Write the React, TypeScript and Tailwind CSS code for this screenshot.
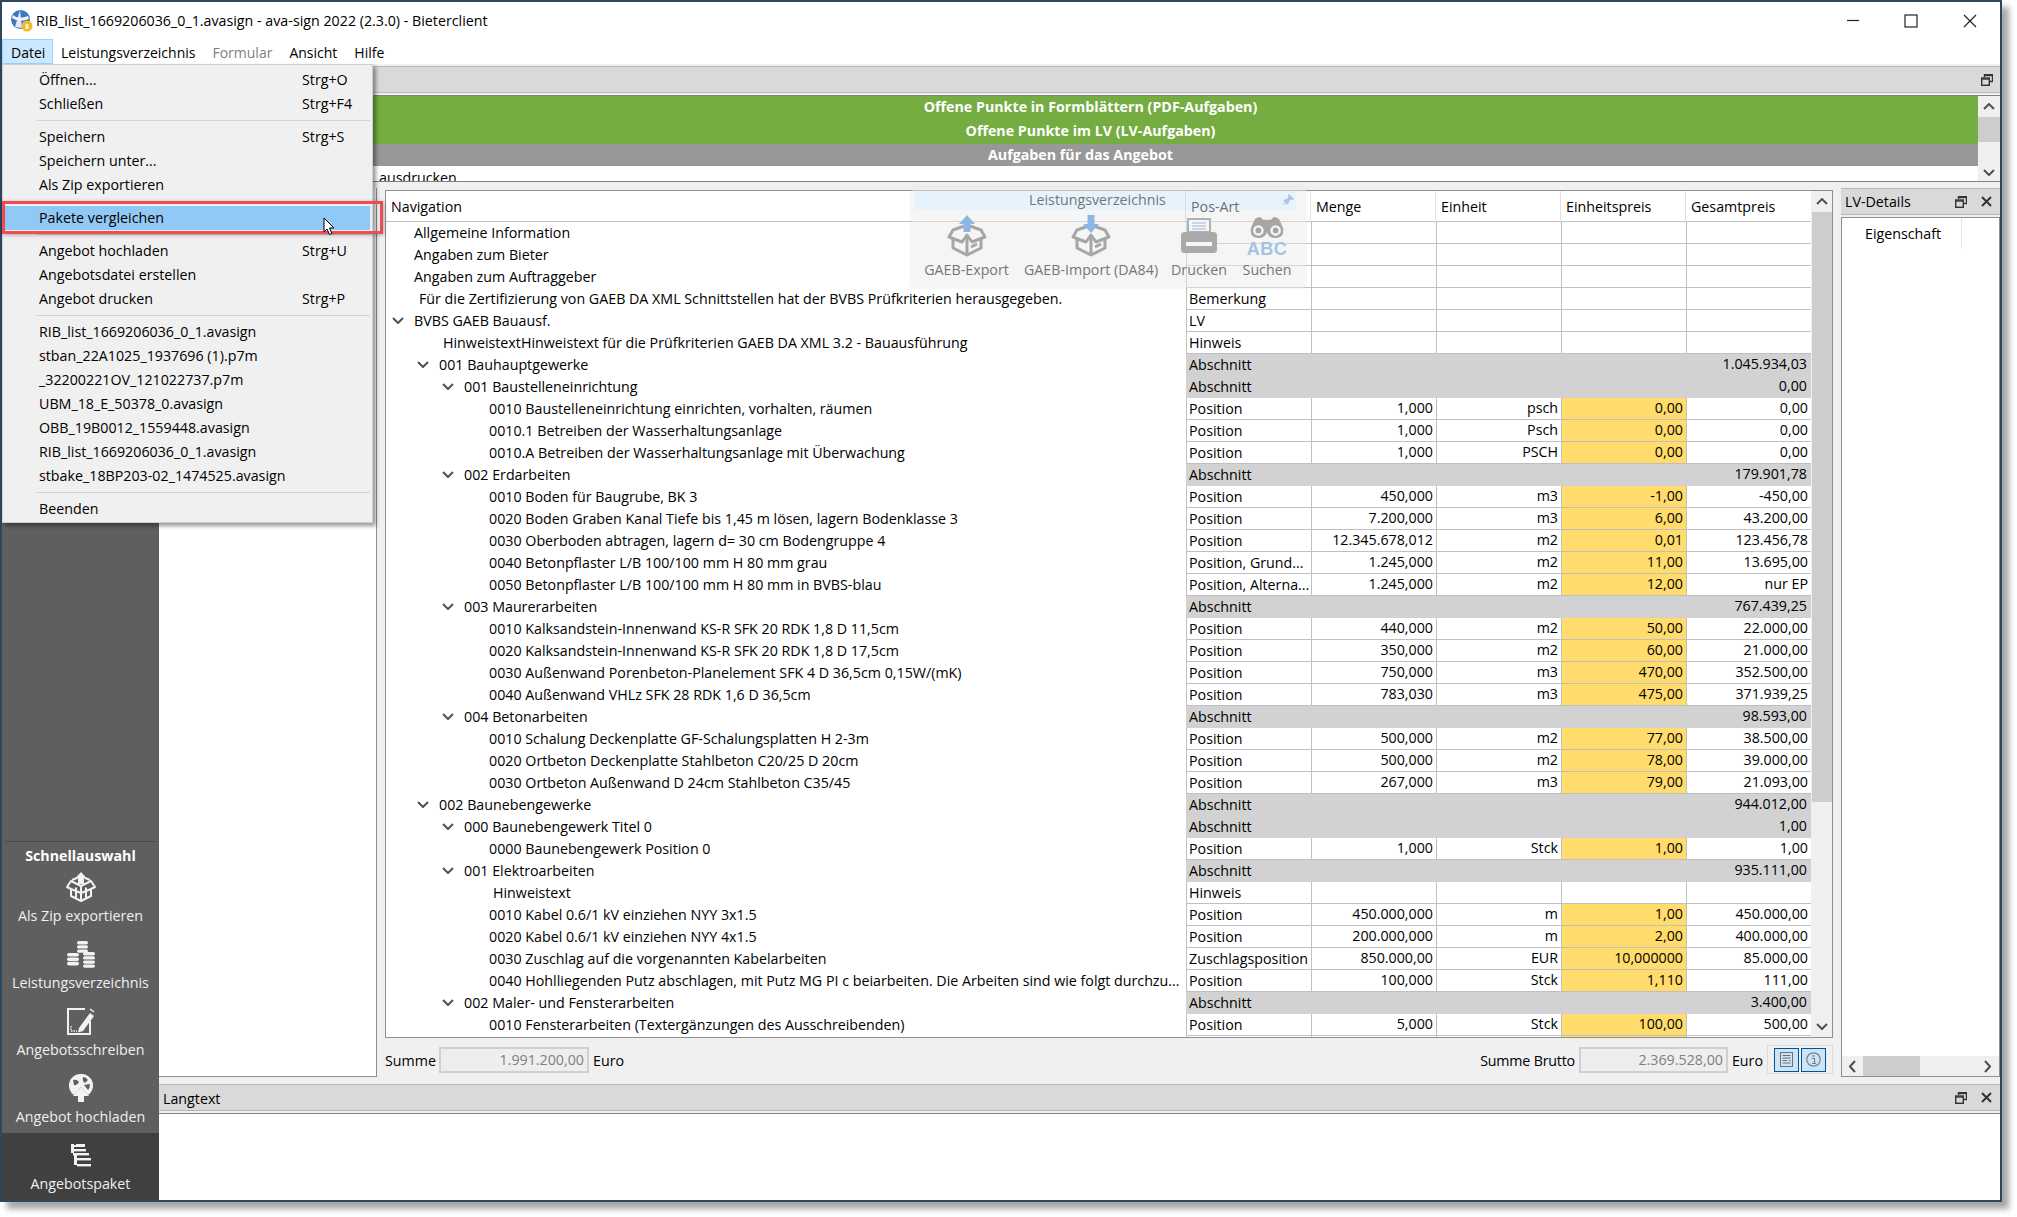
import React from "react";

const ROW_TEXT = "whitespace-nowrap overflow-hidden";

type Row = {
  nav: string;
  ind: string;
  chev?: boolean;
  art?: string;
  menge?: string;
  einh?: string;
  ep?: string;
  gp?: string;
  gray?: boolean;
};

const IND: Record<string, string> = {
  a: "pl-[28px]",
  b: "pl-[33px]",
  h: "pl-[57px]",
  c0: "pl-[3px]",
  c1: "pl-[28px]",
  c2: "pl-[53px]",
  p: "pl-[103px]",
  q: "pl-[107px]",
};

const pos = (nav: string, menge: string, einh: string, ep: string, gp: string, art = "Position"): Row => ({ nav, ind: "p", art, menge, einh, ep, gp });
const sec = (nav: string, ind: string, gp: string): Row => ({ nav, ind, chev: true, art: "Abschnitt", gp, gray: true });

const ROWS: Row[] = [
  { nav: "Allgemeine Information", ind: "a" },
  { nav: "Angaben zum Bieter", ind: "a" },
  { nav: "Angaben zum Auftraggeber", ind: "a" },
  { nav: "Für die Zertifizierung von GAEB DA XML Schnittstellen hat der BVBS Prüfkriterien herausgegeben.", ind: "b", art: "Bemerkung" },
  { nav: "BVBS GAEB Bauausf.", ind: "c0", chev: true, art: "LV" },
  { nav: "HinweistextHinweistext für die Prüfkriterien GAEB DA XML 3.2 - Bauausführung", ind: "h", art: "Hinweis" },
  sec("001 Bauhauptgewerke", "c1", "1.045.934,03"),
  sec("001 Baustelleneinrichtung", "c2", "0,00"),
  pos("0010 Baustelleneinrichtung einrichten, vorhalten, räumen", "1,000", "psch", "0,00", "0,00"),
  pos("0010.1 Betreiben der Wasserhaltungsanlage", "1,000", "Psch", "0,00", "0,00"),
  pos("0010.A Betreiben der Wasserhaltungsanlage mit Überwachung", "1,000", "PSCH", "0,00", "0,00"),
  sec("002 Erdarbeiten", "c2", "179.901,78"),
  pos("0010 Boden für Baugrube, BK 3", "450,000", "m3", "-1,00", "-450,00"),
  pos("0020 Boden Graben Kanal Tiefe bis 1,45 m lösen, lagern Bodenklasse 3", "7.200,000", "m3", "6,00", "43.200,00"),
  pos("0030 Oberboden abtragen, lagern d= 30 cm Bodengruppe 4", "12.345.678,012", "m2", "0,01", "123.456,78"),
  pos("0040 Betonpflaster L/B 100/100 mm H 80 mm grau", "1.245,000", "m2", "11,00", "13.695,00", "Position, Grund..."),
  pos("0050 Betonpflaster L/B 100/100 mm H 80 mm in BVBS-blau", "1.245,000", "m2", "12,00", "nur EP", "Position, Alterna..."),
  sec("003 Maurerarbeiten", "c2", "767.439,25"),
  pos("0010 Kalksandstein-Innenwand KS-R SFK 20 RDK 1,8 D 11,5cm", "440,000", "m2", "50,00", "22.000,00"),
  pos("0020 Kalksandstein-Innenwand KS-R SFK 20 RDK 1,8 D 17,5cm", "350,000", "m2", "60,00", "21.000,00"),
  pos("0030 Außenwand Porenbeton-Planelement SFK 4 D 36,5cm 0,15W/(mK)", "750,000", "m3", "470,00", "352.500,00"),
  pos("0040 Außenwand VHLz SFK 28 RDK 1,6 D 36,5cm", "783,030", "m3", "475,00", "371.939,25"),
  sec("004 Betonarbeiten", "c2", "98.593,00"),
  pos("0010 Schalung Deckenplatte GF-Schalungsplatten H 2-3m", "500,000", "m2", "77,00", "38.500,00"),
  pos("0020 Ortbeton Deckenplatte Stahlbeton C20/25 D 20cm", "500,000", "m2", "78,00", "39.000,00"),
  pos("0030 Ortbeton Außenwand D 24cm Stahlbeton C35/45", "267,000", "m3", "79,00", "21.093,00"),
  sec("002 Baunebengewerke", "c1", "944.012,00"),
  sec("000 Baunebengewerk Titel 0", "c2", "1,00"),
  pos("0000 Baunebengewerk Position 0", "1,000", "Stck", "1,00", "1,00"),
  sec("001 Elektroarbeiten", "c2", "935.111,00"),
  { nav: "Hinweistext", ind: "q", art: "Hinweis" },
  pos("0010 Kabel 0.6/1 kV einziehen NYY 3x1.5", "450.000,000", "m", "1,00", "450.000,00"),
  pos("0020 Kabel 0.6/1 kV einziehen NYY 4x1.5", "200.000,000", "m", "2,00", "400.000,00"),
  pos("0030 Zuschlag auf die vorgenannten Kabelarbeiten", "850.000,00", "EUR", "10,000000", "85.000,00", "Zuschlagsposition"),
  pos("0040 Hohlliegenden Putz abschlagen, mit Putz MG PI c beiarbeiten. Die Arbeiten sind wie folgt durchzu...", "100,000", "Stck", "1,110", "111,00"),
  sec("002 Maler- und Fensterarbeiten", "c2", "3.400,00"),
  pos("0010 Fensterarbeiten (Textergänzungen des Ausschreibenden)", "5,000", "Stck", "100,00", "500,00"),
  pos("", "", "", " ", "", ""),
];

const Chevron = ({ dir = "down", className = "" }: { dir?: "down" | "up" | "left" | "right"; className?: string }) => {
  const d = { down: "M1 1 L6 6 L11 1", up: "M1 6 L6 1 L11 6", left: "M6 1 L1 6.5 L6 12", right: "M1 1 L6 6.5 L1 12" }[dir];
  const v = dir === "left" || dir === "right" ? "0 0 7 13" : "0 0 12 7";
  const w = dir === "left" || dir === "right" ? 7 : 12;
  const h = dir === "left" || dir === "right" ? 13 : 7;
  return (
    <svg width={w} height={h} viewBox={v} className={className}>
      <path d={d} fill="none" stroke="#505050" strokeWidth="2" />
    </svg>
  );
};

const Restore = ({ className = "" }: { className?: string }) => (
  <svg width="12" height="12" viewBox="0 0 12 12" className={className}>
    <path d="M3.5 3 V0.5 H11.5 V7.5 H8.5" fill="none" stroke="#333" strokeWidth="1.4" />
    <path d="M3.5 1.5 H11" stroke="#333" strokeWidth="1.4" />
    <rect x="0.7" y="4" width="7.6" height="7.3" fill="none" stroke="#333" strokeWidth="1.4" />
    <path d="M1 5 H8" stroke="#333" strokeWidth="1.4" />
  </svg>
);

const CloseX = ({ className = "" }: { className?: string }) => (
  <svg width="11" height="11" viewBox="0 0 11 11" className={className}>
    <path d="M1 1 L10 10 M10 1 L1 10" stroke="#333" strokeWidth="2" />
  </svg>
);

const BoxIcon = ({ dir }: { dir: "up" | "down" }) => (
  <svg width="42" height="42" viewBox="0 0 42 42">
    <g fill="none" stroke="#a6a6a6" strokeWidth="3" strokeLinejoin="round">
      <path d="M7 15 L21 10 L35 15 L39 22 L26 27 L21 20 L16 27 L3 22 Z" />
      <path d="M7 24 V33 L21 40 L35 33 V24" />
      <path d="M21 21 V40" />
      <path d="M25 32 L31 29" />
    </g>
    {dir === "up" ? (
      <path d="M21 0 L29 9 H24.5 V17 H17.5 V9 H13 Z" fill="#8db7e2" />
    ) : (
      <path d="M17.5 0 H24.5 V9 H29 L21 18 L13 9 H17.5 Z" fill="#8db7e2" />
    )}
  </svg>
);

const Printer = () => (
  <svg width="38" height="36" viewBox="0 0 38 36">
    <path d="M8 1 H30 V14 H8 Z" fill="#f6f6f6" stroke="#b0b0b0" strokeWidth="2" />
    <path d="M12 5 H26 M12 8 H26 M12 11 H26" stroke="#b8cde2" strokeWidth="1.4" />
    <rect x="1" y="14" width="36" height="21" rx="3.5" fill="#aaaaaa" />
    <rect x="6" y="24" width="26" height="4" fill="#f6f6f6" />
  </svg>
);

const Binoculars = () => (
  <svg width="36" height="22" viewBox="0 0 36 23">
    <path d="M5 3 Q7 0 11 0 L14 3 H22 L25 0 Q29 0 31 3 L35 12 Q36 22 27 22 Q20 22 18 16 Q16 22 9 22 Q0 22 1 12 Z" fill="#a6a6a6" />
    <circle cx="9" cy="14" r="5.5" fill="#f6f6f6" />
    <circle cx="27" cy="14" r="5.5" fill="#f6f6f6" />
    <circle cx="9" cy="14" r="3" fill="#a6a6a6" />
    <circle cx="27" cy="14" r="3" fill="#a6a6a6" />
  </svg>
);

const SideZip = () => (
  <svg width="30" height="30" viewBox="0 0 30 30">
    <path d="M15 0 L21 6.5 H18 V12 H12 V6.5 H9 Z" fill="#f2f2f2" />
    <g fill="none" stroke="#f2f2f2" strokeWidth="2" strokeLinejoin="round">
      <path d="M6 8 L11 6 M24 8 L19 6" />
      <path d="M5 9 L15 14 L25 9 L29 15 L25 17 V24 L15 29 L5 24 V17 L1 15 Z" />
      <path d="M15 14 V29 M5 17 L15 21 L25 17 M10 15.5 V26.5 M20 15.5 V26.5" />
    </g>
  </svg>
);

const SideCoins = () => (
  <svg width="28" height="27" viewBox="0 0 28 27" fill="#f2f2f2">
    <rect x="10" y="0" width="11" height="3.4" rx="1.7" />
    <rect x="10" y="4.2" width="11" height="3.4" rx="1.7" />
    <rect x="10" y="8.4" width="11" height="3.4" rx="1.7" />
    <rect x="0" y="12" width="12" height="3.6" rx="1.8" />
    <rect x="0" y="16.4" width="12" height="3.6" rx="1.8" />
    <rect x="0" y="20.8" width="12" height="3.6" rx="1.8" />
    <rect x="16" y="11" width="12" height="3.4" rx="1.7" />
    <rect x="16" y="15.2" width="12" height="3.4" rx="1.7" />
    <rect x="16" y="19.4" width="12" height="3.4" rx="1.7" />
    <rect x="16" y="23.4" width="12" height="3.4" rx="1.7" />
  </svg>
);

const SideDoc = () => (
  <svg width="28" height="27" viewBox="0 0 28 27">
    <path d="M18 1 H1 V26 H23 V13" fill="none" stroke="#f2f2f2" strokeWidth="2" />
    <path d="M12 20 L23 5 L27 8 L16 23 L11 24.5 Z" fill="#f2f2f2" />
    <path d="M23 1 L27 4" stroke="#f2f2f2" strokeWidth="1.5" />
    <path d="M4 18 V23 H10" fill="none" stroke="#f2f2f2" strokeWidth="1.3" strokeDasharray="1.5 1" />
  </svg>
);

const SideGlobe = () => (
  <svg width="24" height="28" viewBox="0 0 24 28">
    <path d="M12 0 A11.5 11.5 0 0 1 19 21 L12 13 L5 21 A11.5 11.5 0 0 1 12 0 Z" fill="#f2f2f2" />
    <path d="M4 6 Q8 5 10 8 Q8 12 5 11 Z M14 3 Q17 3 19 6 L16 9 Q13 7 14 3 Z M15 11 L21 10 Q21 14 19 16 Z" fill="#5f5f5f" />
    <path d="M12 13 L20 22 H15 V28 H9 V22 H4 Z" fill="#f2f2f2" />
  </svg>
);

const SideTree = () => (
  <svg width="21" height="23" viewBox="0 0 21 23" fill="#f2f2f2">
    <rect x="1" y="0" width="3" height="9" />
    <rect x="1" y="1" width="14" height="2" />
    <rect x="6" y="0" width="9" height="2.4" />
    <rect x="3" y="5" width="13" height="2.4" />
    <rect x="3" y="9" width="16" height="2.4" />
    <rect x="4" y="9" width="3" height="12" />
    <rect x="7" y="14" width="14" height="2.4" />
    <rect x="7" y="20" width="14" height="2.4" />
  </svg>
);

const AppIcon = () => (
  <svg width="22" height="22" viewBox="0 0 22 22" className="shrink-0">
    <circle cx="9.5" cy="9.5" r="9.5" fill="#3b78c4" />
    <path d="M9 0 L11 18 L4 17 Z" fill="#dfe8f4" />
    <path d="M2 5 Q7 10 17 6 L18 9 Q8 13 1 8 Z" fill="#f0f4fa" />
    <circle cx="16" cy="16" r="5.5" fill="#f0bb2d" />
    <rect x="14.6" y="14" width="2.8" height="5" fill="#fff3c4" />
  </svg>
);

const FieldBox = ({ v, w }: { v: string; w: string }) => (
  <div className={`h-[26px] ${w} border-2 border-[#d0d0d0] bg-[#eeeeee] flex items-center justify-end pr-[3px] text-[#808080]`}>{v}</div>
);

type MI = { t?: string; k?: string; sep?: boolean; hi?: boolean };
const MENU: MI[] = [
  { t: "Öffnen...", k: "Strg+O" },
  { t: "Schließen", k: "Strg+F4" },
  { sep: true },
  { t: "Speichern", k: "Strg+S" },
  { t: "Speichern unter..." },
  { t: "Als Zip exportieren" },
  { sep: true },
  { t: "Pakete vergleichen", hi: true },
  { sep: true },
  { t: "Angebot hochladen", k: "Strg+U" },
  { t: "Angebotsdatei erstellen" },
  { t: "Angebot drucken", k: "Strg+P" },
  { sep: true },
  { t: "RIB_list_1669206036_0_1.avasign" },
  { t: "stban_22A1025_1937696 (1).p7m" },
  { t: "_32200221OV_121022737.p7m" },
  { t: "UBM_18_E_50378_0.avasign" },
  { t: "OBB_19B0012_1559448.avasign" },
  { t: "RIB_list_1669206036_0_1.avasign" },
  { t: "stbake_18BP203-02_1474525.avasign" },
  { sep: true },
  { t: "Beenden" },
];

const SideItem = ({ icon, label, active }: { icon: React.ReactNode; label: string; active?: boolean }) => (
  <div className={`h-[67px] flex flex-col items-center pt-[4px] ${active ? "bg-[#404040]" : ""}`}>
    <div className="h-[36px] flex items-center justify-center">{icon}</div>
    <div className="mt-[1px] leading-[20px] text-[#efefef] whitespace-nowrap">{label}</div>
  </div>
);

export default function App() {
  return (
    <div className="relative w-[2017px] h-[1217px] bg-white overflow-hidden font-['Open_Sans',sans-serif] text-[14.25px] text-black">
      {/* window */}
      <div className="w-[2002px] h-[1202px] border-2 border-[#2d475c] bg-[#f0f0f0] flex flex-col shadow-[7px_7px_6px_rgba(0,0,0,0.35)]">
        {/* title */}
        <div className="h-[37px] shrink-0 bg-white flex items-center pl-[9px] pt-[1px]">
          <AppIcon />
          <span className="ml-[3px] whitespace-nowrap">RIB_list_1669206036_0_1.avasign - ava-sign 2022 (2.3.0) - Bieterclient</span>
          <div className="ml-auto flex items-center">
            <svg width="14" height="14" viewBox="0 0 14 14" className="mr-[44px]"><path d="M1 6.5 H13" stroke="#222" strokeWidth="1.2" /></svg>
            <svg width="14" height="14" viewBox="0 0 14 14" className="mr-[45px]"><rect x="1" y="1" width="12" height="12" fill="none" stroke="#222" strokeWidth="1.2" /></svg>
            <svg width="14" height="14" viewBox="0 0 14 14" className="mr-[23px]"><path d="M1 1 L13 13 M13 1 L1 13" stroke="#222" strokeWidth="1.2" /></svg>
          </div>
        </div>
        {/* menubar */}
        <div className="h-[25px] shrink-0 bg-white flex items-center text-[14px]">
          <div className="h-[25px] w-[51px] pl-[8px] pt-[1px] bg-[#cce8ff] border border-[#99d1ff] flex items-center">Datei</div>
          <span className="ml-[8px] pt-[1px]">Leistungsverzeichnis</span>
          <span className="ml-[17px] pt-[1px] text-[#808080]">Formular</span>
          <span className="ml-[17px] pt-[1px]">Ansicht</span>
          <span className="ml-[17px] pt-[1px]">Hilfe</span>
        </div>
        {/* body */}
        <div className="flex-1 flex min-h-0">
          {/* sidebar */}
          <div className="w-[157px] shrink-0 bg-[#5f5f5f] flex flex-col justify-end">
            <div className="mx-[3px] h-px bg-[#4c4c4c]" />
            <div className="h-[23px] pt-[3px] text-center font-bold text-white leading-[22px]">Schnellauswahl</div>
            <SideItem icon={<SideZip />} label="Als Zip exportieren" />
            <SideItem icon={<SideCoins />} label="Leistungsverzeichnis" />
            <SideItem icon={<SideDoc />} label="Angebotsschreiben" />
            <SideItem icon={<SideGlobe />} label="Angebot hochladen" />
            <SideItem icon={<SideTree />} label="Angebotspaket" active />
          </div>
          {/* right */}
          <div className="flex-1 min-w-0 flex flex-col">
            {/* top panel */}
            <div className="h-[2px] shrink-0" />
            <div className="h-[27px] shrink-0 bg-[#d9d9d9] border-y border-[#b8b8b8] flex items-center justify-end pr-[7px]">
              <Restore />
            </div>
            <div className="h-[2px] shrink-0" />
            <div className="h-[87px] shrink-0 border-y border-[#808080] flex bg-white">
              <div className="flex-1 flex flex-col font-bold text-white text-center overflow-hidden">
                <div className="h-[48px] shrink-0 bg-[#75ad42] flex flex-col items-center pl-[44px]">
                  <div className="h-[24px] leading-[22px]">Offene Punkte in Formblättern (PDF-Aufgaben)</div>
                  <div className="h-[24px] leading-[22px]">Offene Punkte im LV (LV-Aufgaben)</div>
                </div>
                <div className="h-[22px] shrink-0 leading-[22px] bg-[#989898] pl-[24px]">Aufgaben für das Angebot</div>
                <div className="flex-1 overflow-hidden text-left pl-[220px] font-normal text-black leading-[24px]">ausdrucken</div>
              </div>
              <div className="w-[22px] bg-[#f0f0f0] flex flex-col items-center">
                <div className="h-[21px] flex items-center"><Chevron dir="up" /></div>
                <div className="w-full h-[25px] bg-[#cdcdcd]" />
                <div className="flex-1" />
                <div className="h-[18px] flex items-center"><Chevron dir="down" /></div>
              </div>
            </div>
            {/* middle */}
            <div className="flex-1 min-h-0 flex flex-col">
              <div className="flex-1 min-h-0 flex">
                {/* left white panel */}
                <div className="w-[218px] shrink-0 mt-[6px] mb-[7px] bg-white border-r border-b border-[#8f8f8f]" />
                {/* grid column */}
                <div className="w-[448px] grow flex flex-col ml-[8px] mr-[8px] min-w-0">
                  <div className="h-[848px] mt-[8px] shrink-0 border border-[#8f8f8f] bg-white flex overflow-hidden">
                    <div className="flex-1 min-w-0 overflow-hidden">
                      <div className="h-[31px] grid grid-cols-[799px_125px_125px_125px_125px_126px] border-b border-[#c0c0c0]">
                        <div className="pl-[5px] leading-[32px]">Navigation</div>
                        <div className="relative z-10 pl-[5px] leading-[32px] border-l border-[#dcdcdc] text-[#707070]">Pos-Art</div>
                        <div className="relative z-10 pl-[5px] leading-[32px] border-l border-[#e2e2e2]">Menge</div>
                        <div className="pl-[5px] leading-[32px] border-l border-[#e2e2e2]">Einheit</div>
                        <div className="pl-[5px] leading-[32px] border-l border-[#e2e2e2]">Einheitspreis</div>
                        <div className="pl-[5px] leading-[32px] border-l border-[#e2e2e2]">Gesamtpreis</div>
                      </div>
                      {ROWS.map((r, i) => (
                        <div key={i} className="h-[22px] grid grid-cols-[800px_125px_125px_125px_125px_125px] leading-[21px]">
                          <div className={`flex items-center pb-[2px] ${IND[r.ind]} ${ROW_TEXT}`}>
                            {r.chev && (
                              <span className="w-[25px] shrink-0 pl-[3px] flex items-center"><Chevron /></span>
                            )}
                            <span>{r.nav}</span>
                          </div>
                          {r.gray ? (
                            <div className="col-span-5 bg-[#d2d2d2] flex justify-between border-l border-[#d2d2d2]">
                              <span className="pl-[2px] leading-[22px]">{r.art}</span>
                              <span className="pr-[4px] leading-[20px]">{r.gp}</span>
                            </div>
                          ) : (
                            <>
                              <div className={`border-l border-b border-[#c0c0c0] pl-[2px] leading-[22px] ${ROW_TEXT}`}>{r.art}</div>
                              <div className="border-l border-b border-[#c0c0c0] pr-[3px] text-right leading-[20px]">{r.menge}</div>
                              <div className="border-l border-b border-[#c0c0c0] pr-[3px] text-right leading-[20px]">{r.einh}</div>
                              <div className={`border-l border-b border-[#c0c0c0] pr-[3px] text-right leading-[20px] ${r.ep ? "bg-[#ffdc6b]" : ""}`}>{r.ep}</div>
                              <div className="border-l border-b border-[#c0c0c0] pr-[3px] text-right leading-[20px]">{r.gp}</div>
                            </>
                          )}
                        </div>
                      ))}
                    </div>
                    <div className="w-[21px] shrink-0 bg-[#f0f0f0] flex flex-col items-center border-l border-[#f0f0f0]">
                      <div className="h-[21px] flex items-center"><Chevron dir="up" /></div>
                      <div className="w-full h-[590px] bg-[#cdcdcd]" />
                      <div className="flex-1" />
                      <div className="h-[22px] flex items-center"><Chevron dir="down" /></div>
                    </div>
                  </div>
                  {/* footer */}
                  <div className="flex-1 flex items-start pt-[9px]">
                    <span className="w-[54px] leading-[27px] whitespace-nowrap">Summe</span>
                    <FieldBox v="1.991.200,00" w="w-[150px]" />
                    <span className="ml-[4px] leading-[27px]">Euro</span>
                    <span className="ml-auto leading-[27px] whitespace-nowrap tracking-[-0.2px]">Summe Brutto</span>
                    <div className="ml-[4px]"><FieldBox v="2.369.528,00" w="w-[149px]" /></div>
                    <span className="ml-[4px] leading-[27px]">Euro</span>
                    <div className="ml-[4px] -mt-[2px] w-[66px] h-[29px] border border-[#dcdcdc] flex items-center justify-center gap-[2px]">
                      <div className="w-[25px] h-[24px] border border-[#005499] bg-[#cce4f7] flex items-center justify-center">
                        <svg width="13" height="15" viewBox="0 0 13 15"><rect x="0.5" y="0.5" width="12" height="14" fill="none" stroke="#707070" /><path d="M2.5 3.5 H10.5 M2.5 6 H10.5 M2.5 8.5 H7 M9 8.5 H10.5 M2.5 11 H10.5" stroke="#707070" /></svg>
                      </div>
                      <div className="w-[25px] h-[24px] border border-[#005499] bg-[#cce4f7] flex items-center justify-center">
                        <svg width="15" height="15" viewBox="0 0 15 15"><circle cx="7.5" cy="7.5" r="6.7" fill="none" stroke="#808080" strokeWidth="1.2" /><circle cx="7.5" cy="4" r="1" fill="#808080" /><path d="M6 6.5 H8.5 V11.5 M6 11.5 H10" fill="none" stroke="#808080" strokeWidth="1.2" /></svg>
                      </div>
                    </div>
                  </div>
                </div>
                {/* LV details */}
                <div className="w-[159px] shrink-0 flex flex-col mt-[6px] mb-[7px]">
                  <div className="h-[27px] bg-[#d9d9d9] border-y border-[#b8b8b8] flex items-center pl-[4px]">
                    <span className="mt-[1px]">LV-Details</span>
                    <Restore className="ml-auto" />
                    <CloseX className="ml-[14px] mr-[8px]" />
                  </div>
                  <div className="flex-1 mt-[2px] bg-white border border-[#8f8f8f] flex flex-col min-h-0">
                    <div className="h-[31px] w-[120px] border-r border-[#e6e6e6] pl-[23px] leading-[32px]">Eigenschaft</div>
                    <div className="flex-1" />
                    <div className="h-[20px] bg-[#f0f0f0] flex items-center">
                      <div className="w-[21px] flex justify-center"><Chevron dir="left" /></div>
                      <div className="w-[57px] h-full bg-[#cdcdcd]" />
                      <div className="flex-1" />
                      <div className="w-[24px] flex justify-center"><Chevron dir="right" /></div>
                    </div>
                  </div>
                </div>
              </div>
            </div>
            {/* Langtext */}
            <div className="h-[116px] shrink-0 flex flex-col">
              <div className="h-[27px] bg-[#d9d9d9] border-y border-[#b8b8b8] flex items-center pl-[4px]">
                <span className="mt-[2px]">Langtext</span>
                <Restore className="ml-auto" />
                <CloseX className="ml-[14px] mr-[8px]" />
              </div>
              <div className="flex-1 mt-[2px] bg-white border-t border-[#808080]" />
            </div>
          </div>
        </div>
      </div>

      {/* floating toolbar */}
      <div className="absolute left-[911px] top-[187px] w-[395px] h-[101px] rounded-[3px] bg-[#ececec]/50 text-[#757575] shadow-[0_0_3px_rgba(0,0,0,0.08)] p-[4px]">
        <div className="relative h-[19px] w-[381px] bg-[#dff2ff]/70 text-center leading-[18px] pr-[16px]">
          Leistungsverzeichnis
          <svg width="12" height="12" viewBox="0 0 12 12" className="absolute right-[2px] top-[3px]"><path d="M7 0 L12 5 L10.5 6 L8.5 5.5 L6.5 8 L6.5 10 L5 10.5 L1.5 7 L2 5.5 L4 5.5 L6.5 3.5 L6 1.5 Z M3 8 L0 12 L4 9 Z" fill="#a9c4e0" /></svg>
        </div>
        <div className="flex mt-[5px]">
          <div className="w-[103px] flex flex-col items-center">
            <BoxIcon dir="up" />
            <span className="leading-[20px] whitespace-nowrap mt-[3px]">GAEB-Export</span>
          </div>
          <div className="w-[146px] flex flex-col items-center">
            <BoxIcon dir="down" />
            <span className="leading-[20px] whitespace-nowrap mt-[3px]">GAEB-Import (DA84)</span>
          </div>
          <div className="w-[70px] flex flex-col items-center">
            <div className="h-[42px] flex items-center"><Printer /></div>
            <span className="leading-[20px] whitespace-nowrap mt-[3px]">Drucken</span>
          </div>
          <div className="w-[66px] flex flex-col items-center">
            <div className="h-[42px] flex flex-col items-center pt-[2px]">
              <Binoculars />
              <span className="font-['Liberation_Sans',sans-serif] font-bold text-[#a3c2e6] text-[18px] leading-[14px] mt-[3px] tracking-[0.5px]">ABC</span>
            </div>
            <span className="leading-[20px] whitespace-nowrap mt-[3px]">Suchen</span>
          </div>
        </div>
      </div>

      {/* dropdown menu */}
      <div className="absolute left-[2px] top-[64px] w-[371px] h-[459px] bg-[#f0f0f0] border border-[#cfcfcf] shadow-[3px_3px_4px_rgba(0,0,0,0.4)] pt-[3px] pl-[1px]">
        {MENU.map((m, i) =>
          m.sep ? (
            <div key={i} className="h-[9px] flex items-center pl-[33px] pr-[2px]">
              <div className="h-px w-full bg-[#d4d4d4]" />
            </div>
          ) : (
            <div key={i} className={`h-[24px] flex items-center pl-[35px] mr-[2px] ${m.hi ? "bg-[#90c8f6]" : ""}`}>
              <span className="whitespace-nowrap">{m.t}</span>
              {m.k && <span className="absolute left-[299px]">{m.k}</span>}
            </div>
          )
        )}
      </div>

      {/* red annotation */}
      <div className="absolute left-[2px] top-[201px] w-[381px] h-[33px] border-[3px] border-[#ef4b50] shadow-[1px_1px_4px_rgba(0,0,0,0.3)]" />

      {/* cursor */}
      <svg width="13" height="19" viewBox="0 0 13 19" className="absolute left-[323px] top-[217px]">
        <path d="M1 1 V15 L4 12 L6.5 17.5 L9 16.5 L6.5 11 H11 Z" fill="#ffffff" stroke="#000" strokeWidth="1" />
      </svg>
    </div>
  );
}
